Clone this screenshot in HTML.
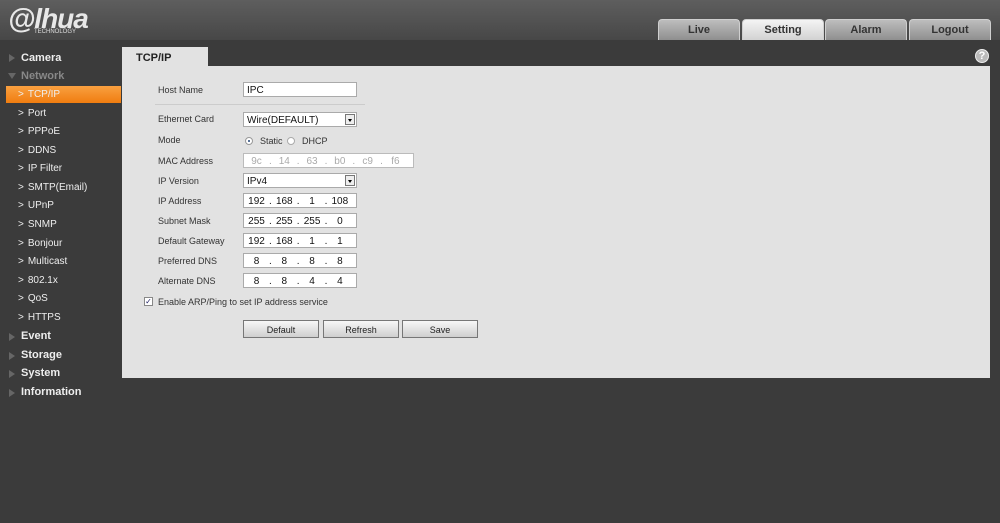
<!DOCTYPE html><html><head><style>
body{margin:0;width:1000px;height:523px;background:#3b3b3b;font-family:"Liberation Sans",sans-serif;position:relative;overflow:hidden}
.hdr{position:absolute;left:0;top:0;width:1000px;height:40px;background:linear-gradient(#5e5e5e,#474747);}
.logo{position:absolute;left:8px;top:3px;color:#e8e8e8;font-size:28px;font-weight:bold;font-style:italic;letter-spacing:-1px}
.logo small{position:absolute;left:26px;top:26px;font-size:6px;font-style:normal;letter-spacing:0;font-weight:normal;color:#ddd}
.tab{position:absolute;top:19px;height:20px;width:80px;border-radius:4px 4px 0 0;background:linear-gradient(#bdbdbd,#8f8f8f);border:1px solid #cfcfcf;border-bottom:none;text-align:center;font-size:11px;font-weight:bold;color:#333;line-height:20px}
.tab.on{background:linear-gradient(#f4f4f4,#d2d2d2)}
.grp{position:absolute;left:21px;font-size:11px;font-weight:bold;color:#eee}
.tri{position:absolute;left:9px;width:0;height:0;border-left:6px solid #666;border-top:4px solid transparent;border-bottom:4px solid transparent}
.it{position:absolute;left:18px;font-size:10px;color:#eee}
.it b{font-weight:normal;display:inline-block;margin-right:4px}
.sel{position:absolute;left:6px;top:86px;width:115px;height:17px;background:linear-gradient(#f9a040,#f07d10)}
.panel{position:absolute;left:122px;top:66px;width:868px;height:312px;background:#e2e2e2}
.ptab{position:absolute;left:122px;top:47px;width:86px;height:20px;background:#e2e2e2;font-size:11px;font-weight:bold;color:#222;line-height:22px;padding-left:14px;box-sizing:border-box}
.lbl{position:absolute;left:158px;font-size:9px;color:#333}
.inp{position:absolute;left:243px;width:114px;height:15px;background:#fff;border:1px solid #aaa;box-sizing:border-box;font-size:10px;color:#111;line-height:15px;padding-left:3px}
.ip span{display:inline-block;width:25px;text-align:center}
.dd{position:absolute;right:1px;top:1px;width:10px;height:11px;border:1px solid #777;background:#eee;box-sizing:border-box}
.dd:after{content:"";position:absolute;left:2px;top:4px;border-top:3px solid #000;border-left:2px solid transparent;border-right:2px solid transparent}
.btn{position:absolute;top:320px;width:76px;height:18px;border:1px solid #777;background:linear-gradient(#f7f7f7,#cfcfcf);font-size:9px;color:#222;text-align:center;line-height:18px;box-sizing:border-box}
</style></head><body>
<div class="hdr"><div class="logo">@lhua<small>TECHNOLOGY</small></div>
<div class="tab" style="left:658px">Live</div><div class="tab on" style="left:742px">Setting</div><div class="tab" style="left:825px">Alarm</div><div class="tab" style="left:909px">Logout</div></div>
<div style="position:absolute;left:975px;top:49px;width:14px;height:14px;border-radius:50%;background:#bbb;border:1px solid #eee;color:#fff;font-size:11px;font-weight:bold;text-align:center;line-height:13px;box-sizing:border-box">?</div>
<div class="tri" style="top:54px"></div><div class="grp" style="top:52px">Camera</div>
<div style="position:absolute;left:8px;top:73px;border-top:6px solid #666;border-left:4px solid transparent;border-right:4px solid transparent"></div><div class="grp" style="top:70px;color:#888">Network</div>
<div class="sel"></div>
<div class="it" style="top:89px"><b>&gt;</b>TCP/IP</div>
<div class="it" style="top:108px"><b>&gt;</b>Port</div>
<div class="it" style="top:126px"><b>&gt;</b>PPPoE</div>
<div class="it" style="top:145px"><b>&gt;</b>DDNS</div>
<div class="it" style="top:163px"><b>&gt;</b>IP Filter</div>
<div class="it" style="top:182px"><b>&gt;</b>SMTP(Email)</div>
<div class="it" style="top:200px"><b>&gt;</b>UPnP</div>
<div class="it" style="top:219px"><b>&gt;</b>SNMP</div>
<div class="it" style="top:238px"><b>&gt;</b>Bonjour</div>
<div class="it" style="top:256px"><b>&gt;</b>Multicast</div>
<div class="it" style="top:275px"><b>&gt;</b>802.1x</div>
<div class="it" style="top:293px"><b>&gt;</b>QoS</div>
<div class="it" style="top:312px"><b>&gt;</b>HTTPS</div>
<div class="tri" style="top:333px"></div><div class="grp" style="top:330px">Event</div>
<div class="tri" style="top:352px"></div><div class="grp" style="top:349px">Storage</div>
<div class="tri" style="top:370px"></div><div class="grp" style="top:367px">System</div>
<div class="tri" style="top:389px"></div><div class="grp" style="top:386px">Information</div>
<div class="ptab">TCP/IP</div>
<div class="panel"></div>
<div style="position:absolute;left:155px;top:104px;width:210px;height:1px;background:#ccc"></div>
<div class="lbl" style="top:85px">Host Name</div><div class="inp" style="top:82px">IPC</div>
<div class="lbl" style="top:114px">Ethernet Card</div><div class="inp" style="top:112px">Wire(DEFAULT)<div class="dd"></div></div>
<div class="lbl" style="top:135px">Mode</div>
<div style="position:absolute;left:245px;top:137px;width:8px;height:8px;border-radius:50%;border:1px solid #999;background:#fff;box-sizing:border-box"><div style="margin:2px;width:2px;height:2px;border-radius:50%;background:#247"></div></div>
<div style="position:absolute;left:260px;top:136px;font-size:9px;color:#333">Static</div>
<div style="position:absolute;left:287px;top:137px;width:8px;height:8px;border-radius:50%;border:1px solid #aaa;background:#fff;box-sizing:border-box"></div>
<div style="position:absolute;left:302px;top:136px;font-size:9px;color:#333">DHCP</div>
<div class="lbl" style="top:156px">MAC Address</div><div class="inp ip" style="top:153px;width:171px;color:#aaa;border-color:#bbb;padding-left:0"><span>9c</span>.<span>14</span>.<span>63</span>.<span>b0</span>.<span>c9</span>.<span>f6</span></div>
<div class="lbl" style="top:176px">IP Version</div><div class="inp" style="top:173px">IPv4<div class="dd"></div></div>
<div class="lbl" style="top:196px">IP Address</div><div class="inp ip" style="top:193px;padding-left:0"><span>192</span>.<span>168</span>.<span>1</span>.<span>108</span></div>
<div class="lbl" style="top:216px">Subnet Mask</div><div class="inp ip" style="top:213px;padding-left:0"><span>255</span>.<span>255</span>.<span>255</span>.<span>0</span></div>
<div class="lbl" style="top:236px">Default Gateway</div><div class="inp ip" style="top:233px;padding-left:0"><span>192</span>.<span>168</span>.<span>1</span>.<span>1</span></div>
<div class="lbl" style="top:256px">Preferred DNS</div><div class="inp ip" style="top:253px;padding-left:0"><span>8</span>.<span>8</span>.<span>8</span>.<span>8</span></div>
<div class="lbl" style="top:276px">Alternate DNS</div><div class="inp ip" style="top:273px;padding-left:0"><span>8</span>.<span>8</span>.<span>4</span>.<span>4</span></div>
<div style="position:absolute;left:144px;top:297px;width:9px;height:9px;border:1px solid #888;background:#fff;box-sizing:border-box;font-size:8px;line-height:7px;color:#226;text-align:center">✓</div>
<div class="lbl" style="top:297px">Enable ARP/Ping to set IP address service</div>
<div class="btn" style="left:243px">Default</div><div class="btn" style="left:323px">Refresh</div><div class="btn" style="left:402px">Save</div>
</body></html>
